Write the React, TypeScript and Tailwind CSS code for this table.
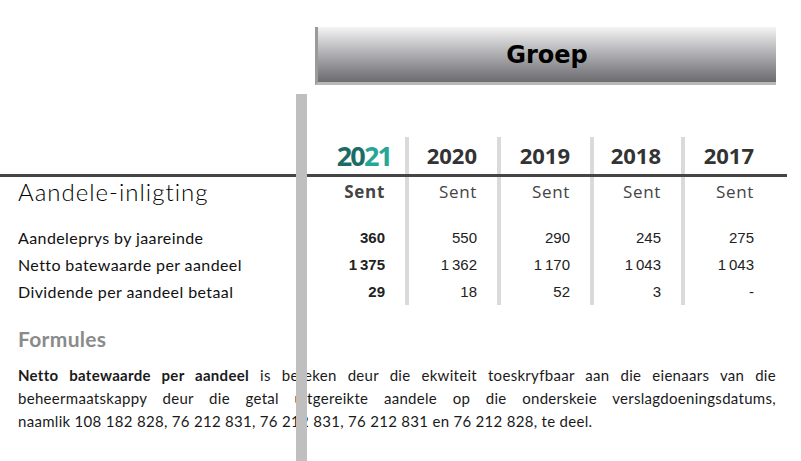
import React from "react";

const years = ["2020", "2019", "2018", "2017"];

const rows = [
  { label: "Aandeleprys by jaareinde", values: ["360", "550", "290", "245", "275"] },
  {
    label: "Netto batewaarde per aandeel",
    values: ["1\u202F375", "1\u202F362", "1\u202F170", "1\u202F043", "1\u202F043"],
  },
  { label: "Dividende per aandeel betaal", values: ["29", "18", "52", "3", "-"] },
];

// widths of the four separated columns (4px border included)
const colClass = [
  "w-[92px] border-l-4 border-[#dadada] pr-5",
  "w-[93px] border-l-4 border-[#dadada] pr-5",
  "w-[91px] border-l-4 border-[#dadada] pr-5",
  "w-[106px] border-l-4 border-[#dadada] pr-[33px]",
];

function Cells({ values, bold }: { values: string[]; bold?: boolean }) {
  return (
    <>
      <div
        className={`w-[98px] pr-5 text-right ${bold ? "font-bold" : ""}`}
      >
        {values[0]}
      </div>
      {values.slice(1).map((v, i) => (
        <div key={i} className={`${colClass[i]} h-full text-right`}>
          {v}
        </div>
      ))}
    </>
  );
}

export default function App() {
  return (
    <div className="relative h-[461px] w-[801px] overflow-hidden bg-white text-[#1c1c1c]">
      {/* Banner */}
      <div className="ml-[315px] mt-[27px] flex h-[58px] w-[461px] items-center justify-center border-b-[3px] border-l-[3px] border-b-[#b8b8b8] border-l-[#9a9a9a] bg-gradient-to-b from-[#f4f4f4] to-[#6c6c71]">
        <span className="font-['DejaVu_Sans',sans-serif] text-[24px] font-bold text-black">
          Groep
        </span>
      </div>

      {/* Table */}
      <div className="mt-[52px] font-['Lato',sans-serif]">
        {/* years */}
        <div className="flex h-[37px] font-['Open_Sans',sans-serif] text-[22px] font-bold leading-[37px] text-[#333]">
          <div className="w-[307px]" />
          <div className="w-[98px] pr-[14px] text-right text-[27px] tracking-[-0.07em]">
            <span className="text-[#1b6c66]">20</span>
            <span className="text-[#27a696]">21</span>
          </div>
          {years.map((y, i) => (
            <div key={y} className={`${colClass[i]} text-right`}>
              {y}
            </div>
          ))}
        </div>

        <div className="h-[3px] w-[787px] bg-[#454545]" />

        {/* Sent row */}
        <div className="flex h-[30px] items-stretch leading-[30px]">
          <div className="w-[307px] pl-[18px] font-['Lato',sans-serif] text-[24px] font-light tracking-[1px] text-black">
            Aandele-inligting
          </div>
          <div className="flex font-['Open_Sans',sans-serif] text-[17px] tracking-[0.04em] text-[#444]">
            <Cells values={["Sent", "Sent", "Sent", "Sent", "Sent"]} bold />
          </div>
        </div>

        <div className="flex h-[17px]">
          <div className="w-[307px]" />
          <Cells values={["", "", "", "", ""]} />
        </div>

        {rows.map((r) => (
          <div key={r.label} className="flex h-[27px] leading-[27px]">
            <div className="w-[307px] pl-[18px] text-[16px] tracking-[0.4px] text-[#111]">
              {r.label}
            </div>
            <div className="flex font-['Liberation_Sans',sans-serif] text-[15px] text-[#222]">
              <Cells values={r.values} bold />
            </div>
          </div>
        ))}
      </div>

      {/* Formules */}
      <div className="mt-[22px] pl-[18px] font-['Lato',sans-serif] text-[21px] font-bold leading-[24px] tracking-[0.3px] text-[#8b8b8b]">
        Formules
      </div>
      <div className="ml-[18px] mt-[13px] w-[758px] font-['Lato',sans-serif] text-[15px] leading-[23px] tracking-[0.3px] text-[#1a1a1a]">
        <div className="text-justify [text-align-last:justify]">
          <b className="font-bold">Netto batewaarde per aandeel</b> is bereken deur die ekwiteit
          toeskryfbaar aan die eienaars van die
        </div>
        <div className="text-justify [text-align-last:justify]">
          beheermaatskappy deur die getal uitgereikte aandele op die onderskeie
          verslagdoeningsdatums,
        </div>
        <div>
          naamlik 108 182 828, 76 212 831, 76 212 831, 76 212 831 en 76 212 828, te deel.
        </div>
      </div>

      {/* grey vertical bar over the content */}
      <div className="absolute bottom-0 left-[296px] top-[94px] w-[11px] bg-[#bfbfbf]" />
    </div>
  );
}
